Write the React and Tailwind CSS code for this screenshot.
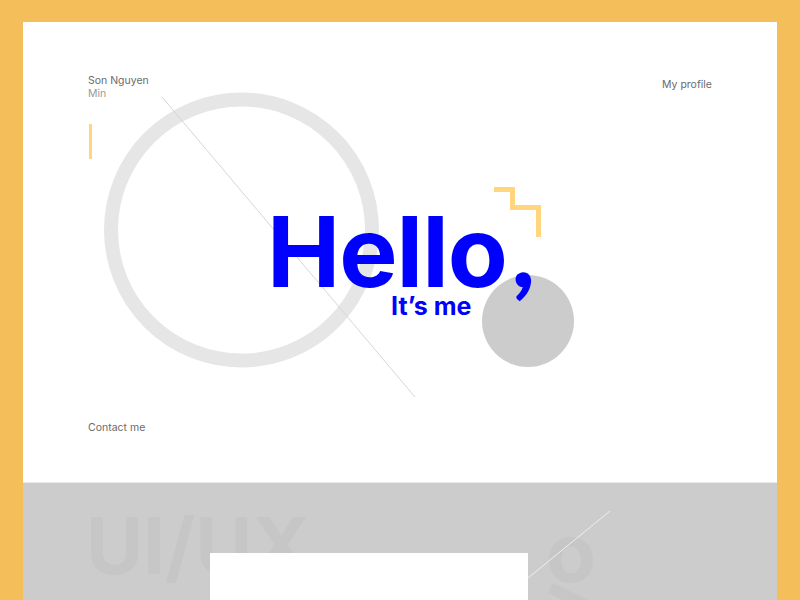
import React from 'react';

const Ring = () => (
  <svg className="absolute left-0 top-0 pointer-events-none" width="754" height="461" viewBox="0 0 754 461">
    {/* big grey ring */}
    <circle cx="218.5" cy="208" r="130.5" fill="none" stroke="#e6e6e6" strokeWidth="14" />
    {/* thin diagonal */}
    <line x1="139" y1="75" x2="392" y2="375" stroke="#d6d6d6" strokeWidth="1" />
    {/* grey disc */}
    <circle cx="505" cy="299" r="46" fill="#cccccc" />
    {/* yellow step */}
    <polyline points="471,167.5 489.5,167.5 489.5,185.5 515.5,185.5 515.5,215" fill="none" stroke="#ffd57e" strokeWidth="5" />
  </svg>
);

export default function App() {
  return (
    <div className="h-[600px] bg-[#f4be5a] px-[23px] pt-[22px] overflow-hidden" style={{ fontFamily: 'Inter, "Noto Sans", sans-serif' }}>
      <div className="relative h-[461px] bg-white flex flex-col px-[65px] pt-[52px] pb-[46px] border-b border-[#e8e8e8]">
        <Ring />
        <div className="relative flex items-start justify-between text-[10.5px] leading-[13px]">
          <div>
            <div className="text-[#6b6b6b]">Son Nguyen</div>
            <div className="text-[#9a9a9a]">Min</div>
          </div>
          <div className="mt-[4px] text-[#6b6b6b]">My profile</div>
        </div>
        <div className="relative mt-[24px] ml-[1px] w-[3px] h-[35px] bg-[#ffd57e]" />
        <div className="relative ml-[179px] mt-[41px] w-[280px] flex flex-col items-start">
          <div className="text-[#0000ff] text-[98px] font-bold leading-none tracking-[-1px] whitespace-nowrap">
            Hello<span className="font-['Lato'] font-black ml-[5px]">,</span>
          </div>
          <div className="self-start ml-[124px] -mt-[7px] text-[#0000ff] text-[25px] font-bold leading-none">It’s me</div>
        </div>
        <div className="relative mt-auto text-[10.5px] text-[#6b6b6b]">Contact me</div>
      </div>
      <div className="relative h-[200px] bg-[#cccccc] overflow-hidden">
        <div className="pl-[63px] pt-[24px] text-[78px] font-bold leading-none text-[#c6c6c6]">UI/UX</div>
        <div className="absolute left-[523px] top-[29px] text-[82px] font-bold leading-none text-[#c6c6c6]">o</div>
        <div className="absolute left-[530px] top-[100px] w-[50px] h-[11px] bg-[#c6c6c6] rotate-[26deg] origin-top-left" />
        <svg className="absolute left-0 top-0" width="754" height="200" viewBox="0 0 754 200">
          <line x1="587" y1="28" x2="505" y2="95" stroke="#eeeeee" strokeWidth="1" />
        </svg>
        <div className="absolute left-[187px] top-[70px] w-[318px] h-[130px] bg-white" />
      </div>
    </div>
  );
}
